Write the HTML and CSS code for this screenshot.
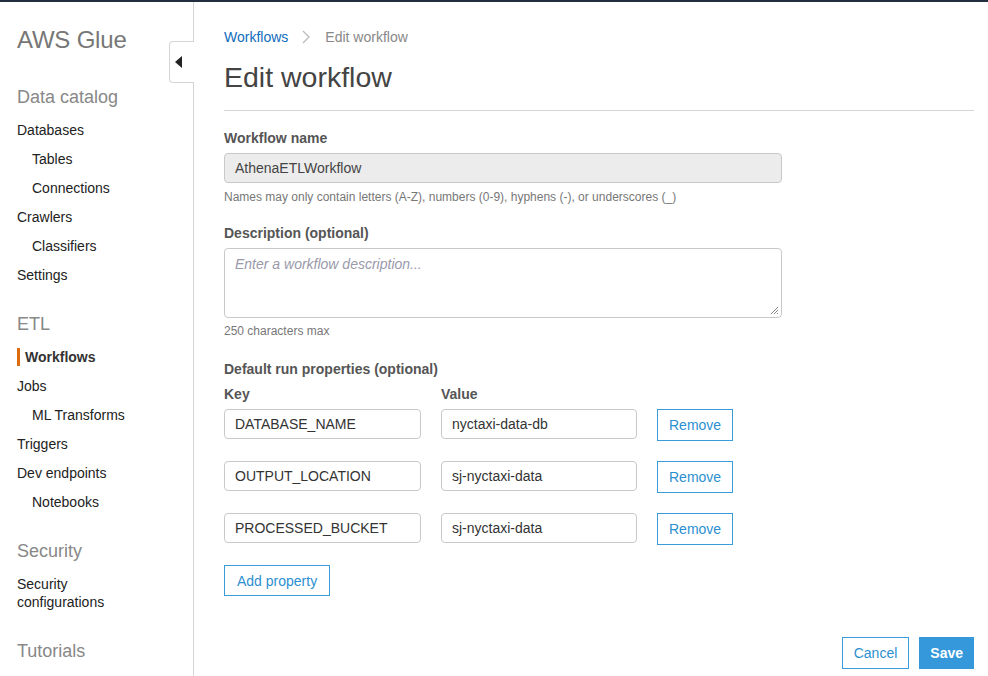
FILE: index.html
```html
<!DOCTYPE html>
<html>
<head>
<meta charset="utf-8">
<link rel="stylesheet" href="styles.css">
</head>
<body>
<div class="topline"></div>
<div class="app">
  <nav class="sidebar">
    <div class="brand">AWS Glue</div>
    <div class="section first">Data catalog</div>
    <a class="item">Databases</a>
    <a class="item sub">Tables</a>
    <a class="item sub">Connections</a>
    <a class="item">Crawlers</a>
    <a class="item sub">Classifiers</a>
    <a class="item">Settings</a>
    <div class="section">ETL</div>
    <a class="item active">Workflows</a>
    <a class="item">Jobs</a>
    <a class="item sub">ML Transforms</a>
    <a class="item">Triggers</a>
    <a class="item">Dev endpoints</a>
    <a class="item sub">Notebooks</a>
    <div class="section">Security</div>
    <a class="item multi">Security configurations</a>
    <div class="section">Tutorials</div>
    <div class="collapse-tab">
      <svg width="8" height="12" viewBox="0 0 8 12"><path d="M7 0 L7 12 L0 6 Z" fill="#222"/></svg>
    </div>
  </nav>
  <main class="main">
    <div class="breadcrumb">
      <a class="crumb-link">Workflows</a>
      <svg class="chev" width="10" height="14" viewBox="0 0 10 14"><path d="M2 1 L8 7 L2 13" fill="none" stroke="#bbb" stroke-width="1.3"/></svg>
      <span class="crumb-current">Edit workflow</span>
    </div>
    <h1 class="title">Edit workflow</h1>
    <div class="form">
      <div class="field">
        <label class="label">Workflow name</label>
        <div class="input disabled">AthenaETLWorkflow</div>
        <div class="hint">Names may only contain letters (A-Z), numbers (0-9), hyphens (-), or underscores (_)</div>
      </div>
      <div class="field">
        <label class="label">Description (optional)</label>
        <div class="textarea">
          <span class="placeholder">Enter a workflow description...</span>
          <svg class="grip" width="10" height="10" viewBox="0 0 10 10"><path d="M9 2 L2 9 M9 5 L5 9 M9 8 L8 9" stroke="#888" stroke-width="1"/></svg>
        </div>
        <div class="hint tight">250 characters max</div>
      </div>
      <div class="field props">
        <label class="label">Default run properties (optional)</label>
        <div class="prop-head">
          <span class="label col-key">Key</span>
          <span class="label col-val">Value</span>
        </div>
        <div class="prop-row">
          <div class="input key">DATABASE_NAME</div>
          <div class="input val">nyctaxi-data-db</div>
          <button class="btn">Remove</button>
        </div>
        <div class="prop-row">
          <div class="input key">OUTPUT_LOCATION</div>
          <div class="input val">sj-nyctaxi-data</div>
          <button class="btn">Remove</button>
        </div>
        <div class="prop-row">
          <div class="input key">PROCESSED_BUCKET</div>
          <div class="input val">sj-nyctaxi-data</div>
          <button class="btn">Remove</button>
        </div>
        <button class="btn add">Add property</button>
      </div>
    </div>
    <div class="actions">
      <button class="btn">Cancel</button>
      <button class="btn primary">Save</button>
    </div>
  </main>
</div>
</body>
</html>
```
FILE: styles.css
```css
* { box-sizing: border-box; }
html, body { margin: 0; padding: 0; }
body {
  font-family: "Liberation Sans", Arial, sans-serif;
  background: #fff;
  color: #222;
  width: 988px;
  height: 676px;
  overflow: hidden;
}
.topline { height: 2px; background: #232f3e; }
.app { display: flex; height: 674px; }
.sidebar {
  width: 194px;
  flex: none;
  border-right: 1px solid #d5d5d5;
  padding: 0 0 0 17px;
  position: relative;
  display: flex;
  flex-direction: column;
}
.brand {
  font-size: 24px;
  color: #777;
  margin-top: 24px;
  line-height: 28px;
  letter-spacing: -0.2px;
}
.section {
  font-size: 18px;
  color: #888;
  line-height: 22px;
  margin-top: 18px;
  margin-bottom: 13px;
}
.section.first { margin-top: 32px; }
.item {
  font-size: 14px;
  color: #222;
  line-height: 18px;
  margin-bottom: 11px;
  display: block;
}
.item.sub { padding-left: 15px; }
.item.active {
  font-weight: bold;
  color: #333;
  border-left: 3px solid #dd6b10;
  padding-left: 5px;
  margin-top: 0;
  margin-bottom: 11px;
}
.item.multi { width: 120px; }
.collapse-tab {
  position: absolute;
  left: 169px;
  top: 39px;
  width: 25px;
  height: 42px;
  background: #fff;
  border: 1px solid #d5d5d5;
  border-right: none;
  border-radius: 4px 0 0 4px;
  display: flex;
  align-items: center;
  justify-content: center;
  padding-right: 6px;
}
.main {
  flex: 1;
  padding: 25px 14px 0 30px;
  display: flex;
  flex-direction: column;
}
.breadcrumb {
  display: flex;
  align-items: center;
  font-size: 14px;
  line-height: 20px;
}
.crumb-link { color: #0f6cbd; }
.chev { margin: 0 14px 0 13px; }
.crumb-current { color: #888; }
.title {
  font-size: 28.5px;
  font-weight: normal;
  color: #444;
  margin: 12px 0 0 0;
  line-height: 36px;
  padding-bottom: 15px;
  border-bottom: 1px solid #d5d5d5;
}
.form { width: 558px; padding-top: 18px; }
.field { margin-bottom: 20px; }
.label {
  display: block;
  font-size: 14px;
  font-weight: bold;
  color: #555;
  line-height: 18px;
  margin-bottom: 6px;
}
.input {
  height: 30px;
  border: 1px solid #c9c9c9;
  border-radius: 4px;
  font-size: 14px;
  color: #333;
  padding: 0 10px;
  display: flex;
  align-items: center;
  background: #fff;
}
.input.disabled { background: #ececec; color: #444; }
.hint {
  font-size: 12px;
  color: #777;
  margin-top: 7px;
  line-height: 14px;
}
.hint.tight { margin-top: 6px; }
.textarea {
  height: 70px;
  border: 1px solid #c9c9c9;
  border-radius: 4px;
  padding: 6px 10px;
  position: relative;
}
.placeholder { font-size: 14px; font-style: italic; color: #99a; }
.grip { position: absolute; right: 2px; bottom: 2px; }
.props { padding-top: 2px; }
.props > .label { margin-bottom: 7px; }
.prop-head { display: flex; }
.col-key { width: 217px; }
.prop-row {
  display: flex;
  align-items: flex-start;
  margin-bottom: 20px;
}
.input.key { width: 197px; margin-right: 20px; }
.input.val { width: 196px; margin-right: 20px; }
.btn {
  font-family: "Liberation Sans", Arial, sans-serif;
  font-size: 14px;
  height: 32px;
  border: 1px solid #3a9bd9;
  background: #fff;
  color: #2d8fd0;
  padding: 0 11px;
  border-radius: 0;
  cursor: pointer;
}
.btn.add { height: 31px; padding: 0 12px; }
.actions {
  margin-top: auto;
  margin-bottom: 7px;
  display: flex;
  justify-content: flex-end;
  gap: 10px;
}
.btn.primary { background: #3498db; color: #fff; border-color: #3498db; font-weight: bold; padding: 0 10px; }
```
